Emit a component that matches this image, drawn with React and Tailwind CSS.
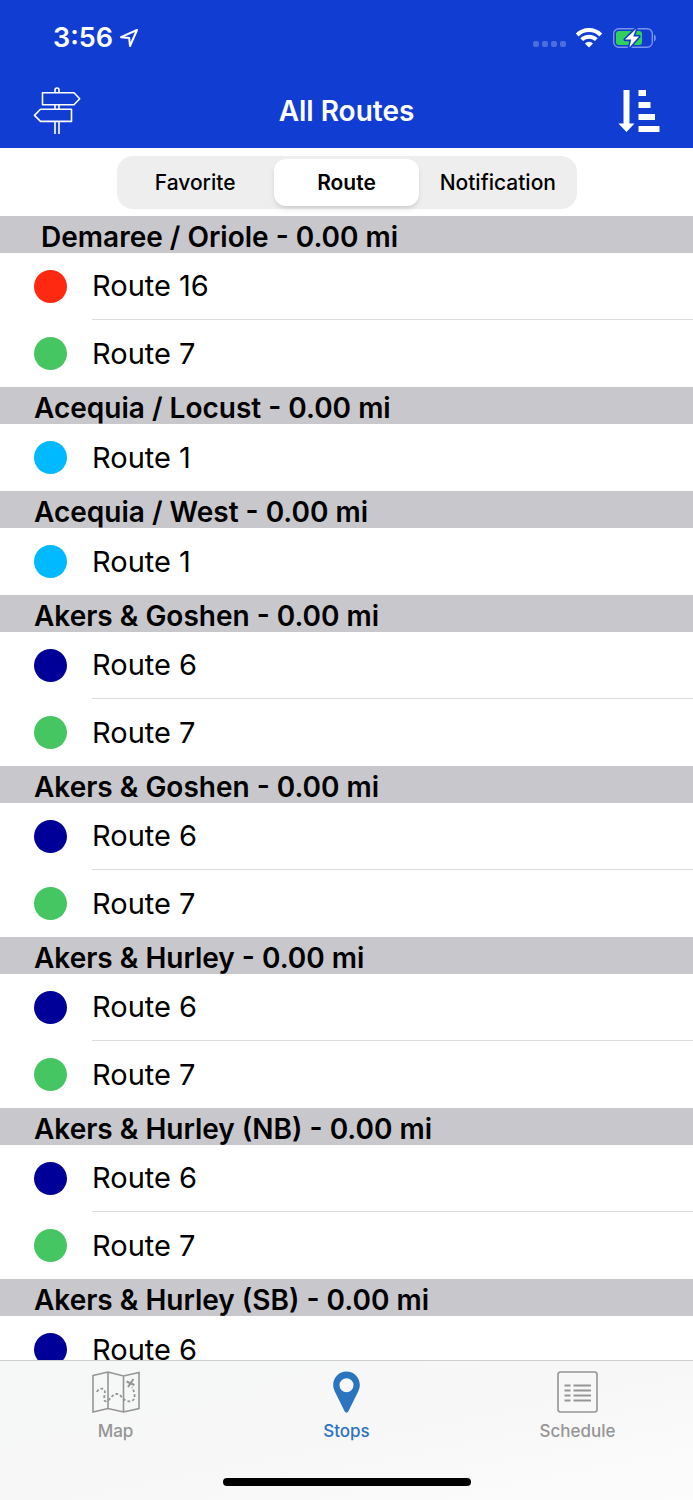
import React, { useState } from 'react';

const RED = 'bg-[#ff2912]';
const GREEN = 'bg-[#46c663]';
const SKY = 'bg-[#00b9ff]';
const NAVY = 'bg-[#000099]';

const stops = [
  { name: ' Demaree / Oriole', distance: '0.00', routes: [{ name: 'Route 16', color: RED }, { name: 'Route 7', color: GREEN }] },
  { name: 'Acequia / Locust', distance: '0.00', routes: [{ name: 'Route 1', color: SKY }] },
  { name: 'Acequia / West', distance: '0.00', routes: [{ name: 'Route 1', color: SKY }] },
  { name: 'Akers & Goshen', distance: '0.00', routes: [{ name: 'Route 6', color: NAVY }, { name: 'Route 7', color: GREEN }] },
  { name: 'Akers & Goshen', distance: '0.00', routes: [{ name: 'Route 6', color: NAVY }, { name: 'Route 7', color: GREEN }] },
  { name: 'Akers & Hurley', distance: '0.00', routes: [{ name: 'Route 6', color: NAVY }, { name: 'Route 7', color: GREEN }] },
  { name: 'Akers & Hurley (NB)', distance: '0.00', routes: [{ name: 'Route 6', color: NAVY }, { name: 'Route 7', color: GREEN }] },
  { name: 'Akers & Hurley (SB)', distance: '0.00', routes: [{ name: 'Route 6', color: NAVY }] },
];

const LocationArrow = () => (
  <svg width="20" height="20" viewBox="0 0 20 20" fill="none" stroke="white" strokeWidth="2" strokeLinejoin="round" aria-hidden="true">
    <path d="M18 2 2 9.2l8.2.8.8 8z" />
  </svg>
);

const WifiIcon = () => (
  <svg width="28" height="22" viewBox="0 0 28 22" fill="none" stroke="white" strokeWidth="4" aria-hidden="true">
    <path d="M2.2 8a16.6 16.6 0 0 1 23.6 0" />
    <path d="M6.7 12.7a10.3 10.3 0 0 1 14.6 0" />
    <path d="M14 20.6 9.9 16.4a5.8 5.8 0 0 1 8.2 0z" fill="white" stroke="none" />
  </svg>
);

const BatteryIcon = () => (
  <svg width="46" height="24" viewBox="0 0 46 24" aria-hidden="true">
    <rect x="1.7" y="2.7" width="38.6" height="18.6" rx="5" fill="none" stroke="white" strokeOpacity="0.45" strokeWidth="1.4" />
    <path d="M42 8.5c2.4.8 2.4 6.2 0 7z" fill="white" fillOpacity="0.45" />
    <rect x="4" y="5" width="26" height="14" rx="3" fill="#30d158" />
    <path d="M24 3 13 13.6h6.2L17.400 21.500 27 10.400h-5.800z" fill="white" stroke="#113dd3" strokeWidth="3.2" strokeLinejoin="round" paintOrder="stroke" />
  </svg>
);

const SignpostIcon = () => (
  <svg width="48" height="48" viewBox="0 0 48 48" fill="none" stroke="white" strokeWidth="1.6" strokeLinejoin="round" aria-hidden="true">
    <path d="M22 5.5V3q0-2 2-2t2 2v2.5M22 18v4M26 18v4M22 34.5V47M26 34.5V47" />
    <path d="M9.5 5.7H41l5.7 6.1L41 17.800H9.5z" />
    <path d="M38.5 22.3H7.5L1.5 28.4l6 6h31z" />
  </svg>
);

const SortIcon = () => (
  <svg width="42" height="44" viewBox="0 0 42 44" fill="white" aria-hidden="true">
    <path d="M5.5 1h6v33.5h5L8.500 43 .4 34.500h5.100z" />
    <path d="M20.5 1h7.5v6h-7.500zM20.500 13h12v6h-12zM20.500 25h16.500v6h-16.500zM20.500 37h21v6h-21z" />
  </svg>
);

const MapIcon = () => (
  <svg width="48" height="42" viewBox="0 0 48 42" fill="none" stroke="currentColor" strokeWidth="1.6" aria-hidden="true">
    <path d="M1 4.5 16 1l15.500 4L47 1.500v36L31.500 41 16 37.500 1 41zM16 1v36.500M31.500 5v36" />
    <path d="M5 21c1-3 5-4.500 7-2.500 2.500 2.500-1.500 9 1 11.500 4 2 6-6.500 11.500-7.200 5 .7 5 5.200 10 7 5 1.500 9-.5 8-6-.3-3-1.200-5-2.500-8" strokeWidth="1.800" strokeDasharray="2.800 2" />
    <path d="m34.500 10.500 8 3.500M41.500 8 36 16" strokeWidth="2" />
  </svg>
);

const PinIcon = () => (
  <svg width="28" height="42" viewBox="0 0 28 42" fill="currentColor" aria-hidden="true">
    <path fillRule="evenodd" d="M13.500.5C6 .5.200 6.500.200 13.800c0 2.500.6 4.500 1.600 6.700l9.800 19.800q1.900 2.800 3.800 0l9.800-19.800c1-2.200 1.600-4.200 1.600-6.700C26.800 6.500 21 .5 13.500.5zM13.500 7.200a7 7 0 1 1 0 14 7 7 0 0 1 0-14z" />
  </svg>
);

const ScheduleIcon = () => (
  <svg width="42" height="42" viewBox="0 0 42 42" fill="none" stroke="currentColor" strokeWidth="1.6" aria-hidden="true">
    <rect x="1" y="1" width="39" height="40" rx="2.500" />
    <path d="M7.500 14.500h6M16.500 14.500H34M7.500 19.500h6M16.500 19.500H34M7.500 24.500h6M16.500 24.500H34M7.500 29.500h6M16.500 29.500H34" strokeWidth="1.800" />
  </svg>
);

const filters = ['Favorite', 'Route', 'Notification'];

const tabs = [
  { id: 'map', label: 'Map', Icon: MapIcon },
  { id: 'stops', label: 'Stops', Icon: PinIcon },
  { id: 'schedule', label: 'Schedule', Icon: ScheduleIcon },
];

const StopSection = ({ stop }) => (
  <section>
    <h2 className="bg-[#c8c7cc] pl-[34px] pr-4 pt-1.5 text-[28px] leading-[31px] font-semibold whitespace-pre-wrap">
      {stop.name} - {stop.distance} mi
    </h2>
    <ul>
      {stop.routes.map((route, i) => (
        <li key={route.name} className="flex h-[67px] items-center pl-[34px]">
          <span className={`size-[33px] shrink-0 rounded-full ${route.color}`} />
          <span
            className={`ml-[25px] flex h-full flex-1 items-center text-[29px] leading-9 ${
              i < stop.routes.length - 1 ? 'border-b border-[#dcdcde]' : ''
            }`}
          >
            {route.name}
          </span>
        </li>
      ))}
    </ul>
  </section>
);

const App = () => {
  const [filter, setFilter] = useState('Route');
  const [activeTab, setActiveTab] = useState('stops');

  return (
    <div className="flex h-screen flex-col bg-white font-['Inter',sans-serif] text-black">
      <header className="shrink-0 bg-[#113dd3] pb-0.5 text-white">
        {/* Status bar */}
        <div className="flex h-[76px] items-center justify-between pl-[53px] pr-[35px]">
          <div className="flex items-center gap-1.5">
            <span className="text-[27px] leading-8 font-semibold">3:56</span>
            <LocationArrow />
          </div>
          <div className="flex items-center gap-[9px]">
            <div className="flex gap-[3px] pt-3">
              <span className="size-1.5 rounded-xs bg-white/25" />
              <span className="size-1.5 rounded-xs bg-white/25" />
              <span className="size-1.5 rounded-xs bg-white/25" />
              <span className="size-1.5 rounded-xs bg-white/25" />
            </div>
            <WifiIcon />
            <BatteryIcon />
          </div>
        </div>

        {/* Navigation bar */}
        <div className="grid h-[70px] grid-cols-[1fr_auto_1fr] items-center pl-[33px] pr-[33px]">
          <button type="button" aria-label="Stops nearby" className="justify-self-start">
            <SignpostIcon />
          </button>
          <h1 className="text-[28px] leading-9 font-semibold">All Routes</h1>
          <button type="button" aria-label="Sort" className="justify-self-end">
            <SortIcon />
          </button>
        </div>
      </header>

      <div className="flex shrink-0 justify-center px-4 pt-2 pb-[7px]">
        <div className="grid w-[460px] grid-cols-3 rounded-2xl bg-[#eeeeef] p-[3px]">
          {filters.map((name) => (
            <button
              key={name}
              type="button"
              aria-pressed={filter === name}
              onClick={() => setFilter(name)}
              className={`mx-[3px] h-[47px] rounded-xl text-[21px] leading-7 ${
                filter === name ? 'bg-white font-semibold shadow-md' : 'font-medium'
              }`}
            >
              {name}
            </button>
          ))}
        </div>
      </div>

      <main className="min-h-0 flex-1 overflow-y-auto [scrollbar-width:none]">
        {stops.map((stop, i) => (
          <StopSection key={i} stop={stop} />
        ))}
      </main>

      <footer className="shrink-0 border-t border-[#cfcfd1] bg-linear-to-br from-[#f5f8f6] via-[#f7f7f7] to-[#fcfcfc]">
        <nav className="grid grid-cols-3 pt-2.5">
          {tabs.map(({ id, label, Icon }) => (
            <button
              key={id}
              type="button"
              onClick={() => setActiveTab(id)}
              className={`flex flex-col items-center gap-1.5 text-[17px] leading-6 font-medium ${
                activeTab === id ? 'text-[#2b74c0]' : 'text-[#959595]'
              }`}
            >
              <Icon />
              {label}
            </button>
          ))}
        </nav>
        <div className="flex justify-center pt-[35px] pb-3.5">
          <div className="h-2 w-[248px] rounded-full bg-black" />
        </div>
      </footer>
    </div>
  );
};

export default App;
